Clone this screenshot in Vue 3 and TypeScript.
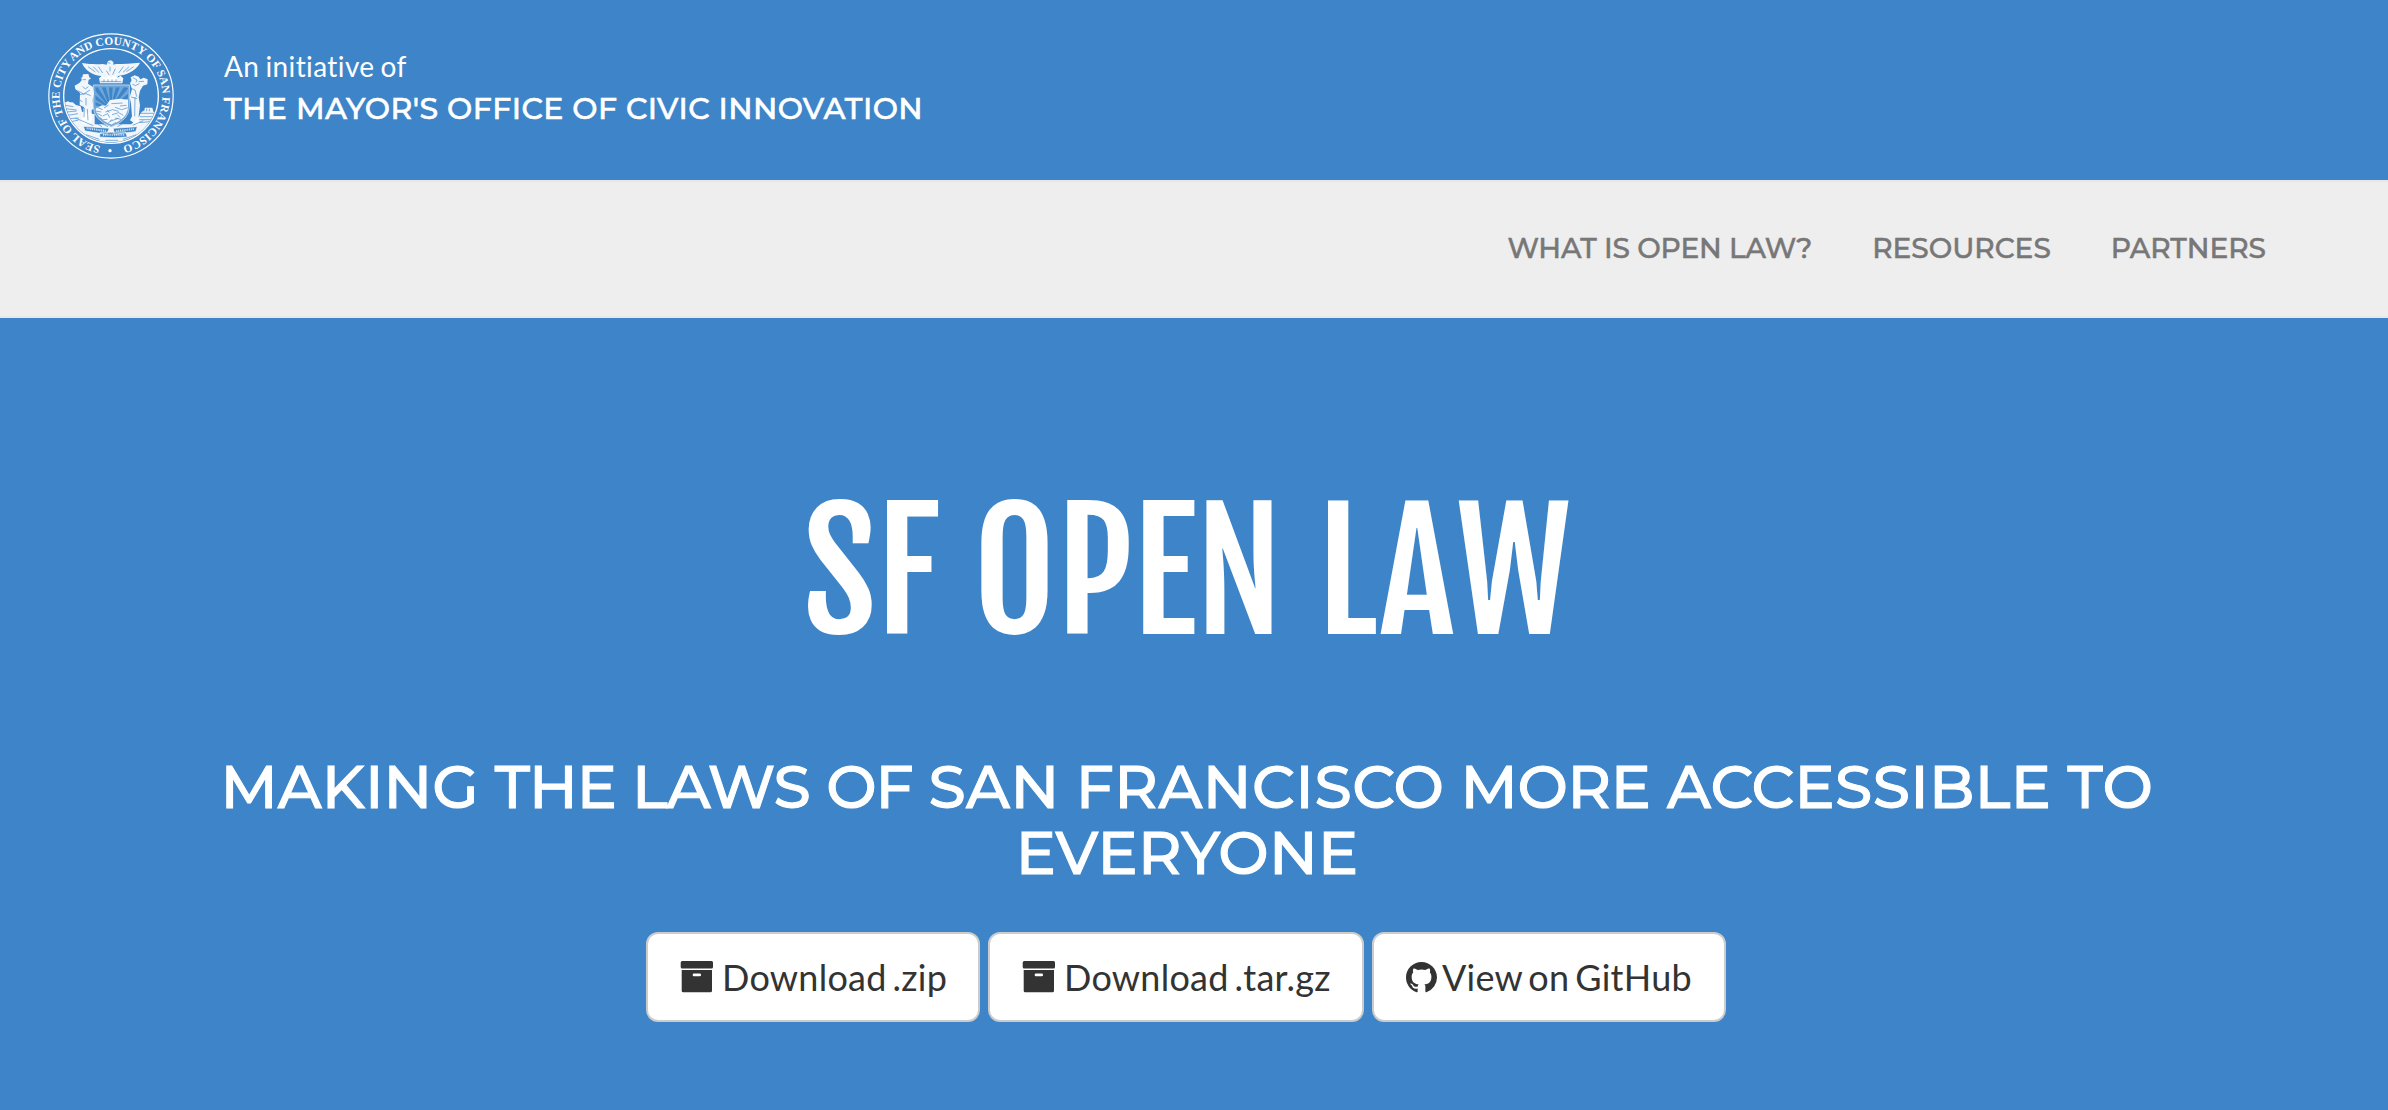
<script setup lang="ts">
interface NavLink {
  label: string
  href: string
}

interface Action {
  label: string
  icon: 'archive' | 'github'
  href: string
  width: number
}

interface Word {
  text: string
  // letter spacing in pixels
  track: number
}

const links: NavLink[] = [
  { label: 'What is Open Law?', href: '#about' },
  { label: 'Resources', href: '#resources' },
  { label: 'Partners', href: '#partners' },
]

const actions: Action[] = [
  { label: 'Download .zip', icon: 'archive', href: '#zip', width: 334 },
  { label: 'Download .tar.gz', icon: 'archive', href: '#tar', width: 376 },
  { label: 'View on GitHub', icon: 'github', href: '#github', width: 354 },
]

const tagline: Word[] = [
  { text: 'Making', track: 0 },
  { text: 'the', track: -1 },
  { text: 'laws', track: -0.8 },
  { text: 'of', track: -1.2 },
  { text: 'San', track: 0.4 },
  { text: 'Francisco', track: 0.5 },
  { text: 'more', track: -0.3 },
  { text: 'accessible', track: 0.3 },
  { text: 'to', track: 0.5 },
  { text: 'everyone', track: 0.2 },
]

// Sun rays on the shield, fanned out from its lower centre
const rays = [-72, -54, -36, -18, 0, 18, 36, 54, 72]
</script>

<template>
  <div class="page">
    <header class="top">
      <svg class="seal" viewBox="54 37 378 378" role="img" aria-label="City seal">
        <defs>
          <path id="seal-ring" d="M243 380a154 154 0 0 1 0-308a154 154 0 0 1 0 308" />
          <clipPath id="seal-disc"><circle cx="243" cy="226" r="139" /></clipPath>
          <clipPath id="seal-shield">
            <path d="M196 200h98v58q0 35-49 54q-49-19-49-54z" />
          </clipPath>
        </defs>
        <g fill="none" stroke="#fff">
          <circle cx="243" cy="226" r="186.500" stroke-width="3.500" />
          <circle cx="243" cy="226" r="142" stroke-width="4" />
        </g>
        <text class="seal-text" textLength="900">
          <textPath href="#seal-ring" startOffset="32" textLength="900">SEAL OF THE CITY AND COUNTY OF SAN FRANCISCO</textPath>
        </text>
        <circle cx="240" cy="390" r="5" fill="#fff" />

        <!-- hills, buildings and ground -->
        <g clip-path="url(#seal-disc)">
          <path class="w" d="M102 246l12-4 6 3 8 0 10 8 14 4 4 16 38 8 0 30 110 0 24-24 4-10 10-8 3-8h22l3 12 22 4v60l-150 70-130-70z" />
          <path class="b-line" d="M106 254l24 4M106 264l34 4M110 274l30-3M112 284l32-5M116 294l30-2M124 303l22-5M330 278h46M330 288h42M328 297h40M326 306l36-3M342 272v-8M350 272v-8M358 272v-8M196 306l20 12M280 308l20-8" />
        </g>

        <!-- eagle and crown -->
        <path class="w" d="M156 127c22 4 45 4 62 3l12 2 4-11 9-2 7 5 0 8 8-2c22 0 47-2 72-4-9 20-33 34-55 38l-11 2-5 13h-37l-9-13c-25-2-48-17-57-39z" />
        <path class="b-line" d="M174 138l22 16M190 138l17 18M205 138l13 19M311 138l-22 15M297 138l-18 17M280 138l-14 19M234 126l7 2M229 150l9 13M256 144l-8 18M240 138v14" />
        <path class="w" d="M207 173l8-7 10 6 9-7 9 6 9-7 10 7 10-6 8 8-3 15h-67z" />
        <path class="b-line" d="M212 183h62M222 176v8M234 176v8M246 176v8M258 176v8" />

        <!-- shield -->
        <path d="M190 193h108v65q0 40-54 60q-54-20-54-60z" class="shield" />
        <g clip-path="url(#seal-shield)">
          <path v-for="a in rays" :key="a" class="ray" d="M241 262l3 0 5-78h-13z" :transform="`rotate(${a} 243 264)`" />
          <path class="w" d="M190 268l26-14 12 1 12-17 30-4 30 4v84h-110z" />
          <path class="b-line" d="M196 271l18 3M204 261l14 6M222 262l14-9M244 249l34-2M226 274l22-7 18 5M255 260l20 7 18-6M202 278l14 8M218 286l15-7 6 12M246 282l20-6 14 8M212 298l20-2M240 302l25-9M255 292l18 4M246 312l12-7M206 290l10 4M270 256l20-2M232 268l6 8M262 282l8 8M234 308l12-12" />
        </g>

        <!-- miner -->
        <path class="w" d="M151 173l6-3 2-9 16-1 3 10 5 4-7 3-2 12 14 9 4 20-4 20 2 27-5 3 1 30-6 12h-24l-4-8 7-12 2-31-12-6 1-36-14-12-2-10 14-8 7-8-1-9z" />
        <path class="b-line" d="M158 177l10 0M158 197l8 8 9-7M143 210l18 10 19-12M148 222l20-3 14 6M168 232v22M154 259l9 3-1 28M172 265l2 34M150 239l7 4" />

        <!-- sailor -->
        <path class="w" d="M302 170l12-6 12 4 5 8 10-5 12 5-1 15-13 4-9 15-4 20 4 24-6 48 9 9-13 1-12-8-8-5 6-12-3-38-4-19 7-25-6-17 5-9z" />
        <path class="b-line" d="M309 171l12 7-3 7M326 183l16-1M307 190l9 5 12-6M306 204l9 4 5 20M315 229l-1 58M303 229l18 5" />

        <!-- motto ribbons -->
        <g class="ribbon">
          <path d="M160 317l78 6-8 18-65-10zM250 323l72-5-5 15-65 8zM211 335l76-1 5 15q-42 5-84 0z" />
        </g>
        <path class="motto" d="M170 323l58 8M259 331l54-6M219 342h64" />
        <path class="b-line" d="M136 292l54 23M202 301l32 17M340 300l-32 14M286 304l-24 14M168 342l40 14M319 342l-40 14M226 359l38 0" />
      </svg>
      <div class="owner">
        <p class="lead">An initiative of</p>
        <p class="office">The Mayor's Office of Civic Innovation</p>
      </div>
    </header>

    <nav class="nav">
      <a v-for="link in links" :key="link.label" :href="link.href">{{ link.label }}</a>
    </nav>

    <main class="hero">
      <h1>SF <span class="open">Open</span> L<span class="law-a">a</span>w</h1>
      <h2>
        <template v-for="w in tagline" :key="w.text"><span :style="{ letterSpacing: w.track + 'px' }">{{ w.text }}</span>{{ ' ' }}</template>
      </h2>
      <div class="actions">
        <a v-for="a in actions" :key="a.label" class="btn" :class="a.icon" :href="a.href" :style="{ width: a.width + 'px' }">
          <svg v-if="a.icon === 'archive'" width="34" height="34" viewBox="0 0 34 34">
            <path fill="#333" fill-rule="evenodd" d="M2.200 1h29.300a1.500 1.500 0 0 1 1.500 1.500v4.600a1.500 1.500 0 0 1-1.500 1.500h-29.300a1.500 1.500 0 0 1-1.500-1.500v-4.600a1.500 1.500 0 0 1 1.500-1.500zM1.700 10h30.300v20.700a1.500 1.500 0 0 1-1.500 1.500h-27.300a1.500 1.500 0 0 1-1.500-1.500zM14 13.600a1.300 1.300 0 0 0 0 2.700h5.700a1.300 1.300 0 0 0 0-2.700z" />
          </svg>
          <svg v-else width="31" height="31" viewBox="0 0 16 16">
            <path fill="#333" d="M8 0C3.580 0 0 3.580 0 8c0 3.540 2.290 6.530 5.470 7.590.4.070.55-.17.55-.38 0-.19-.01-.82-.01-1.490-2.010.37-2.530-.49-2.690-.94-.09-.23-.48-.94-.82-1.130-.28-.15-.68-.52-.01-.53.63-.01 1.080.58 1.230.82.72 1.210 1.870.87 2.330.66.070-.52.28-.87.51-1.070-1.780-.2-3.640-.89-3.640-3.950 0-.87.31-1.590.82-2.150-.08-.2-.36-1.020.08-2.120 0 0 .67-.21 2.200.82.64-.18 1.320-.27 2-.27.68 0 1.360.09 2 .27 1.530-1.040 2.200-.82 2.200-.82.44 1.100.16 1.920.08 2.120.51.56.82 1.270.82 2.150 0 3.070-1.870 3.750-3.650 3.950.29.25.54.73.54 1.480 0 1.070-.01 1.930-.01 2.200 0 .21.15.46.55.38A8.013 8.013 0 0 0 16 8c0-4.420-3.580-8-8-8z" />
          </svg>
          <span>{{ a.label }}</span>
        </a>
      </div>
    </main>
  </div>
</template>

<style scoped>
.page {
  height: 1110px;
  overflow: hidden;
  background: #3d85c8;
  color: #fff;
  font-family: Lato, 'Liberation Sans', sans-serif;
}
p, h1, h2 { margin: 0; }
.top {
  box-sizing: border-box;
  height: 180px;
  display: flex;
  padding: 32.500px 0 0 48px;
}
.seal { width: 126px; height: 126px; flex: none; }
.seal-text {
  font: bold 34px 'Liberation Serif', serif;
  fill: #fff;
}
.w { fill: #fff; fill-opacity: 0.93; }
.b-line { fill: none; stroke: #3d85c8; stroke-width: 2.600; stroke-opacity: 0.75; }
.shield { fill: #6fa5d8; stroke: #b4d1ec; stroke-width: 3; }
.ray { fill: #3d85c8; }
.ribbon { fill: #3d85c8; stroke: #fff; stroke-width: 2; }
.motto { stroke: #d5e5f4; stroke-width: 6; stroke-dasharray: 3 2.500; fill: none; }
.owner { margin-left: 50px; padding-top: 15px; }
.lead {
  font-size: 28px;
  line-height: 36px;
  letter-spacing: 0.400px;
  word-spacing: -1.500px;
  font-variant-ligatures: none;
}
.office {
  margin-top: 3px;
  font: 500 30px/44px Montserrat, Lato, sans-serif;
  text-transform: uppercase;
  letter-spacing: 0.440px;
  -webkit-text-stroke: 0.600px #fff;
}
.nav {
  box-sizing: border-box;
  height: 138px;
  display: flex;
  justify-content: flex-end;
  align-items: center;
  gap: 60px;
  padding: 0 122px 2px 0;
  background: #eee;
  border: solid #e7e7e7;
  border-width: 2px 0;
}
.nav a {
  font: 500 28px/40px Montserrat, Lato, sans-serif;
  text-transform: uppercase;
  text-decoration: none;
  color: #777;
  -webkit-text-stroke: 0.500px #777;
}
.nav a:first-child { letter-spacing: -0.140px; }
.hero {
  width: 2374px;
  display: flex;
  flex-direction: column;
  align-items: center;
  text-align: center;
}
h1 {
  margin-top: 156px;
  font: 400 160px/200px 'Fjalla One', Oswald, 'Open Sans Condensed', sans-serif;
  text-transform: uppercase;
}
.open { margin-left: -2px; }
.law-a { margin-right: 2px; }
h2 {
  width: 2000px;
  margin-top: 80px;
  font: 500 60px/66px Montserrat, Lato, sans-serif;
  text-transform: uppercase;
  -webkit-text-stroke: 1px #fff;
}
.actions { display: flex; gap: 8px; margin: 46px 2px 0 0; }
.btn {
  box-sizing: border-box;
  height: 90px;
  display: flex;
  align-items: center;
  padding: 0 0 0 32px;
  border: 2px solid #ccc;
  border-radius: 12px;
  background: #fff;
  color: #333;
  font-size: 36px;
  letter-spacing: 0.250px;
  word-spacing: -3.500px;
  text-decoration: none;
  white-space: nowrap;
}
.btn span { margin-left: 8px; }
.github span { margin-left: 5px; }
</style>
